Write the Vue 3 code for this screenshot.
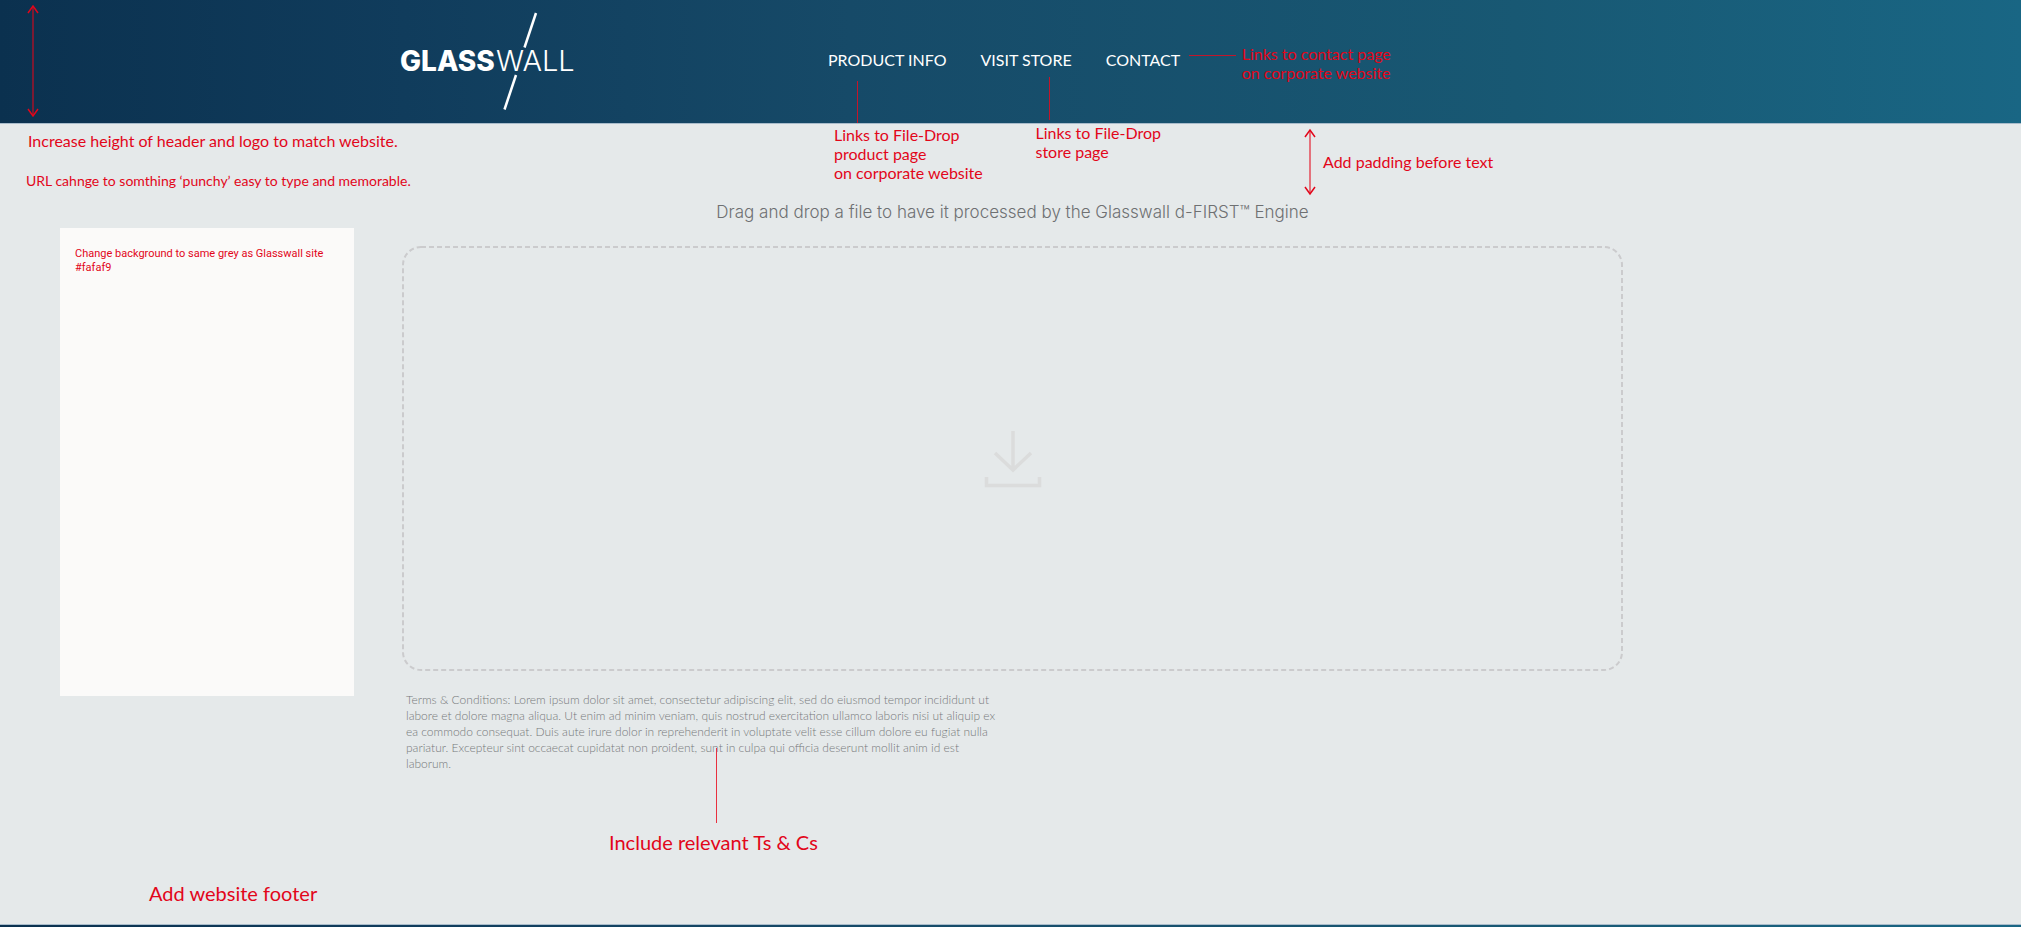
<script setup>
const links = [
  { id: 'product', label: 'PRODUCT INFO', note: ['Links to File-Drop', 'product page', 'on corporate website'] },
  { id: 'store', label: 'VISIT STORE', note: ['Links to File-Drop', 'store page'] },
  { id: 'contact', label: 'CONTACT', note: ['Links to contact page', 'on corporate website'] },
]
</script>

<template>
  <div class="page">
    <header class="header">
      <svg class="arrow header-arrow" width="12" height="114" viewBox="0 0 12 114" aria-hidden="true">
        <path class="shaft" d="M6 2V112" />
        <path d="M1 9L6 2L11 9M1 105L6 112L11 105" />
      </svg>
      <a class="logo" href="#" aria-label="Glasswall">
        <svg width="180" height="123" viewBox="0 0 180 123">
          <text class="logo-bold" x="-2" y="71">GLASS</text>
          <text class="logo-light" x="94" y="71">WALL</text>
          <path d="M134 13L122.500 47.500M114 75L102.500 109.500" />
        </svg>
      </a>
      <nav class="nav" aria-label="Main">
        <ul>
          <li v-for="link in links" :key="link.id" :class="link.id">
            <a href="#">{{ link.label }}</a>
            <span class="connector"></span>
            <p class="note callout">
              <span v-for="line in link.note" :key="line">{{ line }}</span>
            </p>
          </li>
        </ul>
      </nav>
    </header>

    <main class="main">
      <aside class="side">
        <p class="note height-note">Increase height of header and logo to match website.</p>
        <p class="note url-note">URL cahnge to somthing ‘punchy’ easy to type and memorable.</p>
        <div class="swatch">Change background to same grey as Glasswall site<br />#fafaf9</div>
        <p class="note big footer-note">Add website footer</p>
      </aside>

      <section class="content">
        <div class="note padding-note">
          <svg class="arrow" width="12" height="68" viewBox="0 0 12 68" aria-hidden="true">
            <path class="shaft" d="M6 2V66" />
            <path d="M1 9L6 2L11 9M1 59L6 66L11 59" />
          </svg>
          <span>Add padding before text</span>
        </div>
        <h1>Drag and drop a file to have it processed by the Glasswall d-FIRST™ Engine</h1>
        <button class="dropzone" type="button" aria-label="Choose a file to process">
          <svg class="outline" width="100%" height="100%" aria-hidden="true">
            <rect x="1" y="1" rx="18" ry="18" />
          </svg>
          <svg class="download" width="58" height="58" viewBox="0 0 58 58" aria-hidden="true">
            <path d="M29 1V40M11 23L29 40L47 23" />
            <path d="M2.500 47V55.500H55.500V47" />
          </svg>
        </button>
        <div class="terms">
          <p>
            Terms &amp; Conditions: Lorem ipsum dolor sit amet, consectetur adipiscing elit, sed do eiusmod tempor incididunt ut
            labore et dolore magna aliqua. Ut enim ad minim veniam, quis nostrud exercitation ullamco laboris nisi ut aliquip ex
            ea commodo consequat. Duis aute irure dolor in reprehenderit in voluptate velit esse cillum dolore eu fugiat nulla
            pariatur. Excepteur sint occaecat cupidatat non proident, sunt in culpa qui officia deserunt mollit anim id est
            laborum.
          </p>
          <span class="connector"></span>
          <div class="note big terms-note">Include relevant Ts &amp; Cs</div>
        </div>
      </section>
    </main>

    <footer class="footer"></footer>
  </div>
</template>

<style>
body {
  margin: 0;
  background: #e5e9ea;
}
</style>

<style scoped>
.page {
  display: flex;
  flex-direction: column;
  min-height: 100vh;
  background: #e5e9ea;
  font-family: Lato, "Open Sans", sans-serif;
  font-size: 16px;
  line-height: 20px;
}

p,
h1,
ul {
  margin: 0;
  padding: 0;
}

.header,
.footer {
  background: linear-gradient(90deg, #0b314f 0%, #103c5c 20%, #164a68 42%, #185873 75%, #196684 100%);
  background-clip: padding-box;
}

.header {
  position: relative;
  display: flex;
  align-items: flex-start;
  padding-left: 402px;
  border-bottom: 1px solid #a9bccb;
}

.logo {
  display: block;
}

.logo svg {
  display: block;
  overflow: visible;
  font-family: Inter, sans-serif;
  fill: #fff;
}

.logo-bold {
  font-size: 28px;
  font-weight: 800;
}

.logo-light {
  font-size: 29px;
  font-weight: 300;
}

.logo path {
  stroke: #fff;
  stroke-width: 2.500;
}

.nav {
  margin-left: 246px;
  padding-top: 50px;
}

.nav ul {
  display: flex;
  gap: 34px;
  list-style: none;
}

.nav li {
  position: relative;
  white-space: nowrap;
}

.nav a {
  color: #fff;
  text-decoration: none;
}

.note {
  color: #e2061a;
  white-space: nowrap;
}

.big {
  font-size: 20px;
  line-height: 24px;
}

.callout {
  position: absolute;
  z-index: 1;
  line-height: 19px;
}

.callout span {
  display: block;
}

.connector {
  position: absolute;
  width: 1px;
  background: #c4152a;
}

.product .connector {
  top: 31px;
  left: 29px;
  height: 42px;
}

.product .callout {
  top: 75px;
  left: 6px;
}

.store .connector {
  top: 27px;
  left: 69px;
  height: 43px;
}

.store .callout {
  top: 73px;
  left: 55px;
}

.contact .connector {
  top: 5px;
  left: 83px;
  width: 47px;
  height: 1px;
}

.contact .callout {
  top: -6px;
  left: 136px;
}

.arrow {
  display: block;
  fill: none;
  stroke: #e2061a;
  stroke-width: 1.500;
}

.shaft {
  opacity: 0.7;
}

.header-arrow {
  position: absolute;
  top: 4px;
  left: 27px;
}

.main {
  flex: 1;
  display: grid;
  grid-template-columns: 402px minmax(0, 1fr) 398px;
}

.side {
  padding-top: 7px;
}

.height-note {
  padding-left: 28px;
}

.url-note {
  margin-top: 20px;
  padding-left: 26px;
  font-size: 14px;
}

.swatch {
  box-sizing: border-box;
  min-height: 468px;
  margin: 37px 48px 0 60px;
  padding: 19px 15px;
  background: #fbfaf9;
  color: #e2061a;
  font-family: Roboto, sans-serif;
  font-size: 11px;
  line-height: 14px;
  white-space: nowrap;
}

.footer-note {
  margin-top: 185px;
  padding-left: 149px;
}

.content {
  position: relative;
  padding-top: 76px;
}

.padding-note {
  position: absolute;
  top: 4px;
  left: 902px;
  display: flex;
  align-items: center;
  gap: 7px;
}

h1 {
  color: #6e7072;
  font-family: Inter, sans-serif;
  font-size: 17px;
  font-weight: 300;
  line-height: 24px;
  text-align: center;
}

.dropzone {
  position: relative;
  display: flex;
  align-items: center;
  justify-content: center;
  width: 100%;
  min-height: 425px;
  margin-top: 22px;
  padding: 0;
  border: 0;
  background: none;
}

.outline {
  position: absolute;
  inset: 0;
}

.outline rect {
  width: calc(100% - 2px);
  height: calc(100% - 2px);
  fill: none;
  stroke: #cbcbcd;
  stroke-width: 2;
  stroke-dasharray: 5 3;
}

.download {
  fill: none;
  stroke: #dbdcdc;
  stroke-width: 3.500;
}

.terms {
  position: relative;
  max-width: 596px;
  margin-top: 21px;
  padding-left: 4px;
}

.terms p {
  color: #77797b;
  font-size: 12px;
  font-weight: 300;
  line-height: 16px;
}

.terms .connector {
  top: 56px;
  left: 314px;
  height: 75px;
  background: #e8303f;
}

.terms-note {
  margin-top: 58px;
  padding-left: 203px;
}

.footer {
  height: 2px;
  border-top: 1px solid #a9bccb;
}
</style>
